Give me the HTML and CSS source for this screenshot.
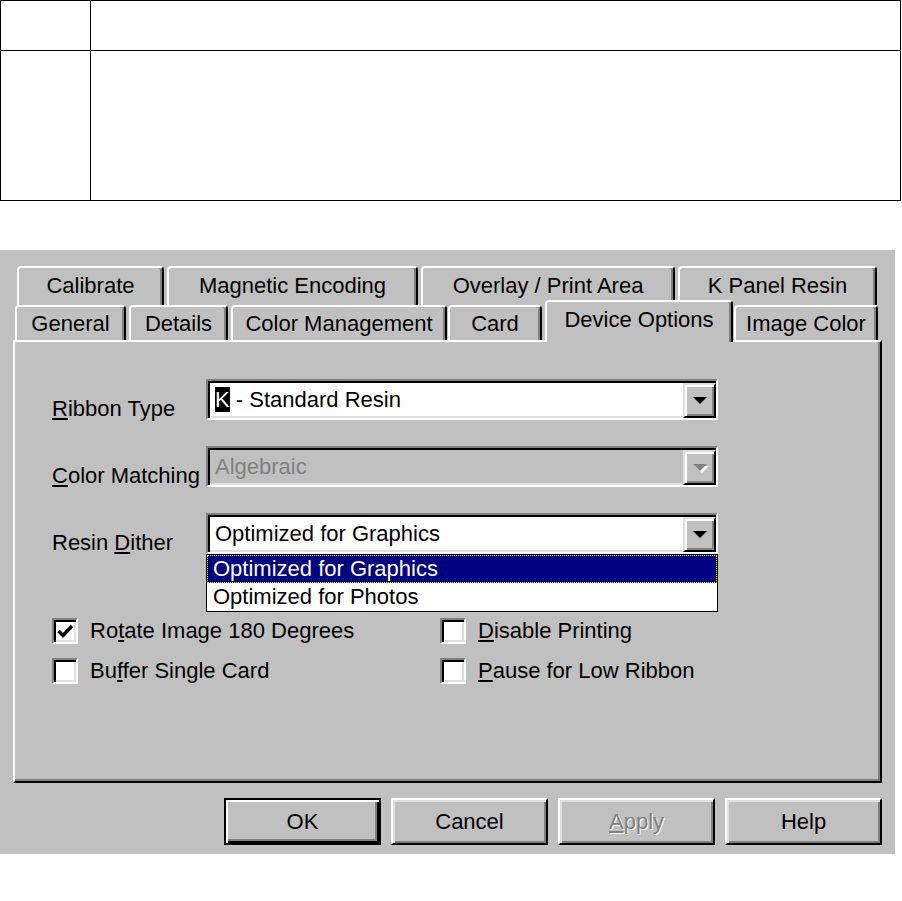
FILE: index.html
```html
<!DOCTYPE html>
<html lang="en">

<head>
    <meta charset="UTF-8" />
    <meta name="viewport" content="width=device-width, initial-scale=1.0" />
    <title>Device Options</title>
    <link rel="stylesheet" href="styles.css">
</head>

<body>
    <table class="grid">
        <tr class="row-short">
            <td class="num"></td>
            <td></td>
        </tr>
        <tr class="row-tall">
            <td class="num"></td>
            <td></td>
        </tr>
    </table>

    <div class="dialog">
        <div class="tabs">
            <div class="tab-row back">
                <div class="tab t-calibrate">Calibrate</div>
                <div class="tab t-magnetic">Magnetic Encoding</div>
                <div class="tab t-overlay">Overlay / Print Area</div>
                <div class="tab t-kpanel">K Panel Resin</div>
            </div>
            <div class="tab-row front">
                <div class="tab t-general">General</div>
                <div class="tab t-details">Details</div>
                <div class="tab t-color">Color Management</div>
                <div class="tab t-card">Card</div>
                <div class="tab active t-device">Device Options</div>
                <div class="tab t-image">Image Color</div>
            </div>
        </div>

        <div class="page">
            <div class="field">
                <label class="field-label"><u>R</u>ibbon Type</label>
                <div class="combo">
                    <span class="combo-text"><span class="hl">K</span> - Standard Resin</span>
                    <span class="combo-btn"><span class="arrow"></span></span>
                </div>
            </div>

            <div class="field">
                <label class="field-label"><u>C</u>olor Matching</label>
                <div class="combo disabled">
                    <span class="combo-text">Algebraic</span>
                    <span class="combo-btn"><span class="arrow"></span></span>
                </div>
            </div>

            <div class="field">
                <label class="field-label">Resin <u>D</u>ither</label>
                <div class="combo">
                    <span class="combo-text">Optimized for Graphics</span>
                    <span class="combo-btn"><span class="arrow"></span></span>
                    <div class="list">
                        <div class="opt selected">Optimized for Graphics</div>
                        <div class="opt">Optimized for Photos</div>
                    </div>
                </div>
            </div>

            <div class="checks">
                <div class="check">
                    <span class="box">
                        <svg width="18" height="18" viewBox="0 0 18 18">
                            <polyline points="1.5,8 6,12.5 15,3" fill="none" stroke="#000" stroke-width="3.5" />
                        </svg>
                    </span>
                    <span>Ro<u>t</u>ate Image 180 Degrees</span>
                </div>
                <div class="check">
                    <span class="box"></span>
                    <span><u>D</u>isable Printing</span>
                </div>
                <div class="check">
                    <span class="box"></span>
                    <span>Bu<u>f</u>fer Single Card</span>
                </div>
                <div class="check">
                    <span class="box"></span>
                    <span><u>P</u>ause for Low Ribbon</span>
                </div>
            </div>
        </div>

        <div class="buttons">
            <div class="btn default">OK</div>
            <div class="btn">Cancel</div>
            <div class="btn disabled"><u>A</u>pply</div>
            <div class="btn">Help</div>
        </div>
    </div>
</body>

</html>
```

FILE: styles.css
```css
body {
    margin: 0;
    background: #fff;
    font-family: 'Liberation Sans', Arial, sans-serif;
}

/* empty table on top */
.grid {
    border-collapse: collapse;
    width: 901px;
}

.grid td {
    border: 1px solid #000;
    padding: 0;
}

.grid .num {
    width: 89px;
}

.row-short {
    height: 50px;
}

.row-tall {
    height: 150px;
}

/* dialog */
.dialog {
    box-sizing: border-box;
    width: 895px;
    height: 604px;
    margin-top: 49px;
    padding: 16px 13px 0 13px;
    background: #c0c0c0;
    font-size: 22px;
    color: #000;
}

.tabs {
    height: 74px;
}

.tab-row {
    display: flex;
    align-items: flex-end;
}

.tab-row.back {
    height: 39px;
    padding-left: 4px;
}

.tab-row.front {
    height: 35px;
    padding-left: 2px;
}

.tab {
    box-sizing: border-box;
    height: 100%;
    margin-right: 3px;
    background: #c0c0c0;
    border-top: 2px solid #fff;
    border-left: 2px solid #fff;
    border-right: 2px solid #000;
    border-radius: 4px 4px 0 0;
    box-shadow: inset -2px 0 #808080;
    text-align: center;
    white-space: nowrap;
}

.back .tab {
    line-height: 35px;
}

.front .tab {
    line-height: 33px;
}

.tab.active {
    position: relative;
    z-index: 1;
    height: 42px;
    margin-bottom: -2px;
    line-height: 36px;
}

.t-calibrate { width: 147px; }
.t-magnetic { width: 251px; }
.t-overlay { width: 254px; }
.t-kpanel { width: 199px; }

.t-general { width: 111px; }
.t-details { width: 99px; }
.t-color { width: 216px; margin-right: 1px; }
.t-card { width: 94px; }
.t-device { width: 188px; margin-right: 1px; }
.t-image { width: 144px; }

.page {
    box-sizing: border-box;
    height: 443px;
    padding: 37px 0 0 37px;
    border: 2px solid;
    border-color: #fff #000 #000 #fff;
    box-shadow: inset -2px -2px #808080;
}

.field {
    display: flex;
    align-items: flex-end;
    margin-bottom: 26px;
}

.field-label {
    width: 154px;
    line-height: 22px;
    white-space: nowrap;
}

.combo {
    position: relative;
    box-sizing: border-box;
    display: flex;
    width: 512px;
    height: 41px;
    padding: 2px 0 0 2px;
    background: #fff;
    border: 2px solid;
    border-color: #808080 #fff #fff #808080;
    box-shadow: inset 2px 2px #000, inset -2px -2px #dfdfdf;
}

.combo-text {
    flex: 1;
    padding-left: 5px;
    line-height: 33px;
    white-space: nowrap;
}

.hl {
    background: #000;
    color: #fff;
}

.combo-btn {
    box-sizing: border-box;
    display: flex;
    align-items: center;
    justify-content: center;
    width: 33px;
    background: #c0c0c0;
    border: 2px solid;
    border-color: #dfdfdf #000 #000 #dfdfdf;
    box-shadow: inset 2px 2px #fff, inset -2px -2px #808080;
}

.arrow {
    width: 0;
    height: 0;
    border-left: 7px solid transparent;
    border-right: 7px solid transparent;
    border-top: 7px solid #000;
}

.combo.disabled {
    background: #c0c0c0;
}

.combo.disabled .combo-text {
    color: #808080;
}

.combo.disabled .arrow {
    border-top-color: #808080;
    filter: drop-shadow(2px 2px 0 #fff);
}

.list {
    position: absolute;
    left: -2px;
    top: calc(100% + 2px);
    box-sizing: border-box;
    width: 512px;
    border: 1px solid #000;
    background: #fff;
    z-index: 2;
}

.opt {
    height: 28px;
    line-height: 28px;
    padding-left: 6px;
    white-space: nowrap;
}

.opt.selected {
    background: #000080;
    color: #fff;
    outline: 1px dotted #ffff00;
    outline-offset: -1px;
}

.checks {
    display: grid;
    grid-template-columns: 388px auto;
    row-gap: 14px;
    margin-top: 64px;
}

.check {
    display: flex;
    align-items: center;
    gap: 12px;
    height: 26px;
    white-space: nowrap;
}

.box {
    box-sizing: border-box;
    display: flex;
    align-items: center;
    justify-content: center;
    width: 26px;
    height: 26px;
    padding: 2px 0 0 2px;
    background: #fff;
    border: 2px solid;
    border-color: #808080 #fff #fff #808080;
    box-shadow: inset 2px 2px #000, inset -2px -2px #dfdfdf;
}

.buttons {
    display: flex;
    justify-content: flex-end;
    gap: 10px;
    margin-top: 15px;
}

.btn {
    box-sizing: border-box;
    width: 157px;
    height: 47px;
    line-height: 43px;
    text-align: center;
    border: 2px solid;
    border-color: #fff #000 #000 #fff;
    box-shadow: inset 2px 2px #dfdfdf, inset -2px -2px #808080;
}

.btn.default {
    border-color: #000;
    box-shadow: inset 2px 2px #fff, inset -2px -2px #000, inset -4px -4px #808080;
}

.btn.disabled {
    color: #808080;
    text-shadow: 1px 1px 0 #fff;
}
```
